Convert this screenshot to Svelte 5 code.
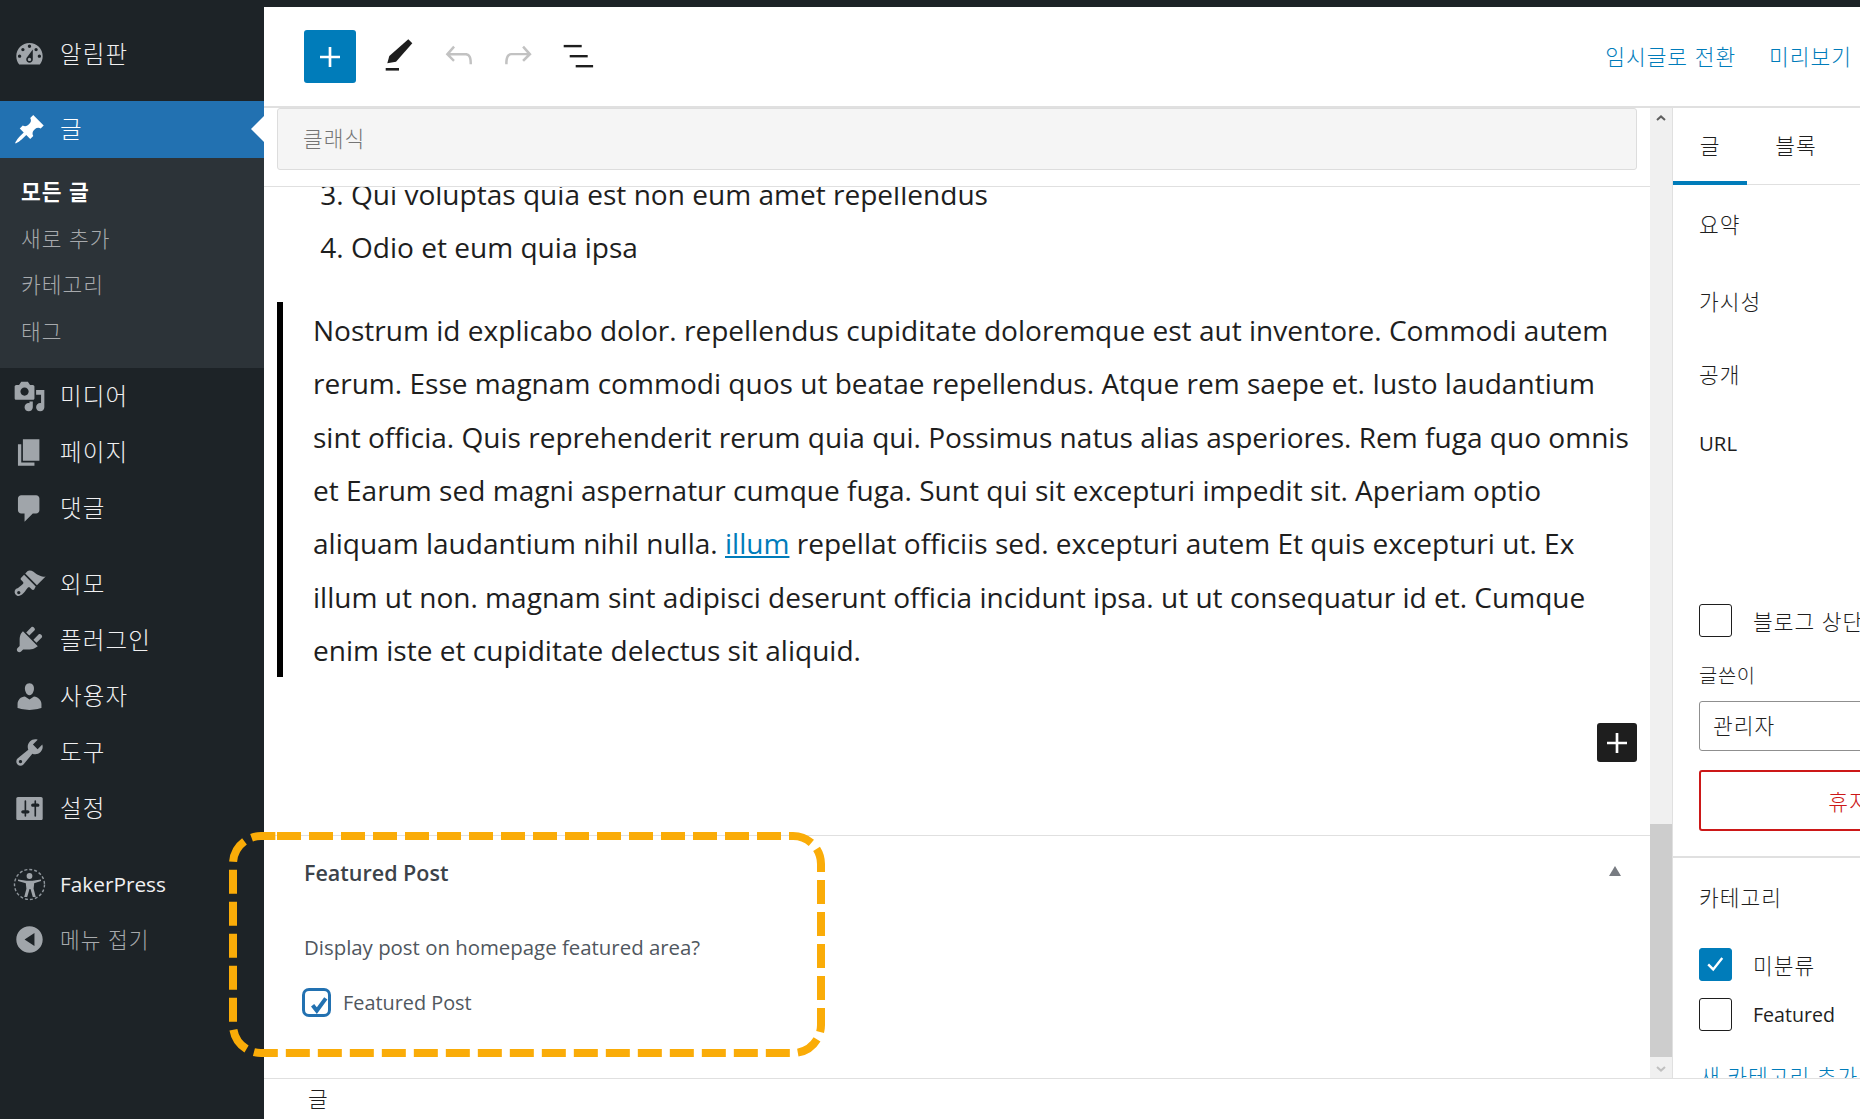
<script>
	const icons = {
		dashboard:
			'M3.76 16h12.48c1.1-1.37 1.76-3.11 1.76-5 0-4.42-3.58-8-8-8s-8 3.58-8 8c0 1.89.66 3.63 1.76 5zM10 4c.55 0 1 .45 1 1s-.45 1-1 1-1-.45-1-1 .45-1 1-1zM6 6c.55 0 1 .45 1 1s-.45 1-1 1-1-.45-1-1 .45-1 1-1zm8 0c.55 0 1 .45 1 1s-.45 1-1 1-1-.45-1-1 .45-1 1-1zm-5.37 5.55L12 7v6c0 1.1-.9 2-2 2s-2-.9-2-2c0-.57.24-1.08.63-1.45zM4 10c.55 0 1 .45 1 1s-.45 1-1 1-1-.45-1-1 .45-1 1-1zm12 0c.55 0 1 .45 1 1s-.45 1-1 1-1-.45-1-1 .45-1 1-1zm-5 3c0-.55-.45-1-1-1s-1 .45-1 1 .45 1 1 1 1-.45 1-1z',
		post: 'M10.44 3.02l1.82-1.82 6.36 6.35-1.83 1.82c-1.05-.68-2.48-.57-3.41.36l-.75.75c-.92.93-1.04 2.35-.35 3.41l-1.83 1.82-2.41-2.41-2.8 2.79c-.42.42-3.38 2.71-3.8 2.29s1.86-3.39 2.28-3.81l2.79-2.79L4.1 9.36l1.83-1.82c1.05.69 2.48.57 3.4-.36l.75-.75c.93-.92 1.05-2.35.36-3.41z',
		media:
			'M13 11V4c0-.55-.45-1-1-1h-1.67L9 1H5L3.67 3H2c-.55 0-1 .45-1 1v7c0 .55.45 1 1 1h10c.55 0 1-.45 1-1zM7 4.5c1.38 0 2.5 1.12 2.5 2.5S8.38 9.5 7 9.5 4.5 8.38 4.5 7 5.62 4.5 7 4.5zM14 6h5v10.5c0 1.38-1.12 2.5-2.5 2.5S14 17.88 14 16.5s1.12-2.5 2.5-2.5c.17 0 .34.02.5.05V9h-3V6zm-4 8.05V13h2v3.5c0 1.38-1.12 2.5-2.5 2.5S7 17.88 7 16.5 8.12 14 9.5 14c.17 0 .34.02.5.05z',
		page: 'M6 15V2h10v13H6zm-1 1h8v2H3V5h2v11z',
		comments: 'M5 2h9c1.1 0 2 .9 2 2v7c0 1.1-.9 2-2 2h-2l-5 5v-5H5c-1.1 0-2-.9-2-2V4c0-1.1.9-2 2-2z',
		appearance:
			'M14.48 11.06L7.41 3.99l1.5-1.5c.5-.56 2.3-.47 3.51.32 1.21.8 1.43 1.28 2.91 2.1 1.18.64 2.45 1.26 4.45.85zm-.71.71L6.7 4.7 4.93 6.47c-.39.39-.39 1.02 0 1.41l1.06 1.06c.39.39.39 1.03 0 1.42-.6.6-1.43 1.11-2.21 1.69-.35.26-.7.53-1.01.84C1.43 13.23 1 14.23 1 15.09c0 .25.03.49.09.71.11.42.33.79.63 1.09.22.22.49.4.78.52.23.09.49.15.75.15.84 0 1.84-.43 3.16-1.76.31-.31.58-.67.84-1.01.58-.78 1.09-1.61 1.69-2.21.39-.39 1.03-.39 1.42 0l1.06 1.06c.39.39 1.02.39 1.41 0zM4.5 15.5c0 .55-.45 1-1 1s-1-.45-1-1 .45-1 1-1 1 .45 1 1z',
		plugins:
			'M13.11 4.36L9.87 7.6 8 5.73l3.24-3.24c.35-.34 1.05-.2 1.56.32.52.51.66 1.21.31 1.55zm-8 1.77l.91-1.12 9.01 9.01-1.19.84c-.71.71-2.63 1.16-3.82 1.16H6.14L4.9 17.26c-.59.59-1.54.59-2.12 0-.59-.58-.59-1.53 0-2.12l1.24-1.24v-3.88c0-1.13.4-3.19 1.09-3.89zm7.26 3.97l3.24-3.24c.34-.35 1.04-.21 1.55.31.52.51.66 1.21.31 1.55l-3.24 3.25z',
		users:
			'M10 9.25c-2.27 0-2.73-3.44-2.73-3.44C7 4.02 7.82 2 9.97 2c2.16 0 2.98 2.02 2.71 3.81 0 0-.41 3.44-2.68 3.44zm0 2.57L12.72 10c2.39 0 4.52 2.33 4.52 4.53v2.49s-3.65 1.13-7.24 1.13c-3.65 0-7.24-1.13-7.24-1.13v-2.49c0-2.25 1.94-4.48 4.47-4.48z',
		tools:
			'M16.68 9.77c-1.34 1.34-3.3 1.67-4.95.99l-5.41 6.52c-.99.99-2.59.99-3.58 0s-.99-2.59 0-3.57l6.52-5.42c-.68-1.65-.35-3.61.99-4.95 1.28-1.28 3.12-1.62 4.72-1.06l-2.89 2.89 2.82 2.82 2.86-2.87c.53 1.58.18 3.39-1.08 4.65zM3.81 16.21c.4.39 1.04.39 1.43 0 .4-.4.4-1.04 0-1.43-.39-.4-1.03-.4-1.43 0-.39.39-.39 1.03 0 1.43z',
		settings:
			'M18 16V4c0-.55-.45-1-1-1H3c-.55 0-1 .45-1 1v12c0 .55.45 1 1 1h14c.55 0 1-.45 1-1zM8 11h1c.55 0 1 .45 1 1s-.45 1-1 1H8v1.5c0 .28-.22.5-.5.5s-.5-.22-.5-.5V13H6c-.55 0-1-.45-1-1s.45-1 1-1h1V5.5c0-.28.22-.5.5-.5s.5.22.5.5V11zm5-2h-1c-.55 0-1-.45-1-1s.45-1 1-1h1V5.5c0-.28.22-.5.5-.5s.5.22.5.5V7h1c.55 0 1 .45 1 1s-.45 1-1 1h-1v5.5c0 .28-.22.5-.5.5s-.5-.22-.5-.5V9z',
		collapse: 'M18 10c0-4.42-3.58-8-8-8s-8 3.58-8 8 3.58 8 8 8 8-3.58 8-8zm-5-4v8l-6-4z'
	};

	const groupOne = [
		{ label: '미디어', icon: 'media' },
		{ label: '페이지', icon: 'page' },
		{ label: '댓글', icon: 'comments' }
	];
	const groupTwo = [
		{ label: '외모', icon: 'appearance' },
		{ label: '플러그인', icon: 'plugins' },
		{ label: '사용자', icon: 'users' },
		{ label: '도구', icon: 'tools' },
		{ label: '설정', icon: 'settings' }
	];
	const subItems = ['모든 글', '새로 추가', '카테고리', '태그'];
	const quoteLines = [
		'Nostrum id explicabo dolor. repellendus cupiditate doloremque est aut inventore. Commodi autem',
		'rerum. Esse magnam commodi quos ut beatae repellendus. Atque rem saepe et. Iusto laudantium',
		'sint officia. Quis reprehenderit rerum quia qui. Possimus natus alias asperiores. Rem fuga quo omnis',
		'et Earum sed magni aspernatur cumque fuga. Sunt qui sit excepturi impedit sit. Aperiam optio'
	];
</script>

{#snippet dashicon(name)}
	<svg class="menuIcon" viewBox="0 0 20 20" aria-hidden="true"><path fill-rule="evenodd" d={icons[name]} /></svg>
{/snippet}

<div class="page">
	<nav class="adminMenu">
		<a class="menuItem first">{@render dashicon('dashboard')}<span>알림판</span></a>
		<a class="menuItem current">{@render dashicon('post')}<span>글</span></a>
		<ul class="subMenu">
			{#each subItems as item, i}
				<li class:subActive={i === 0}>{item}</li>
			{/each}
		</ul>
		{#each groupOne as item}
			<a class="menuItem">{@render dashicon(item.icon)}<span>{item.label}</span></a>
		{/each}
		<div class="menuSep"></div>
		{#each groupTwo as item}
			<a class="menuItem">{@render dashicon(item.icon)}<span>{item.label}</span></a>
		{/each}
		<a class="menuItem faker">
			<svg class="menuIcon" viewBox="0 0 33 33" aria-hidden="true">
				<circle cx="16.5" cy="16.5" r="15" fill="none" stroke="#8e959b" stroke-width="1.4" stroke-dasharray="3 2" />
				<circle cx="16.5" cy="8" r="2.9" />
				<path d="M5 11.5l8.5 1.2h6L28 11.5v1.6l-6.8 2.2-.6 5.4 2.2 8.3h-3l-2.3-8h-1l-2.3 8h-3l2.2-8.3-.6-5.4L5 13.1z" />
			</svg>
			<span>FakerPress</span>
		</a>
		<a class="menuItem collapse">{@render dashicon('collapse')}<span>메뉴 접기</span></a>
	</nav>

	<div class="workspace">
		<header class="topBar">
			<button class="inserter" aria-label="추가">
				<svg viewBox="0 0 24 24"><path d="M18 11.2h-5.2V6h-1.6v5.2H6v1.6h5.2V18h1.6v-5.2H18z" /></svg>
			</button>
			<svg class="toolIcon pen" viewBox="0 0 40 40">
				<path d="M8.3 28.3l2-7.3L29.3 4.3l4 4L17 26.7z" />
				<rect x="6.7" y="33" width="13.3" height="2.6" />
			</svg>
			<svg class="toolIcon history undo" viewBox="0 0 24 24">
				<path d="M18.3 11.7c-.6-.6-1.4-.9-2.3-.9H6.7l2.9-3.3-1.1-1-4.5 5L8.5 16l1-1-2.7-2.7H16c.5 0 .9.2 1.3.5 1 1 1 3.4 1 4.5v.3h1.5v-.2c0-1.5 0-4.3-1.5-5.7z" />
			</svg>
			<svg class="toolIcon history redo" viewBox="0 0 24 24">
				<path d="M15.6 6.5l-1.1 1 2.9 3.3H8c-.9 0-1.7.3-2.3.9-1.4 1.5-1.4 4.2-1.4 5.6v.2h1.5v-.3c0-1.1 0-3.5 1-4.5.3-.3.7-.5 1.3-.5h9.2L14.5 15l1.1 1.1 4.6-4.6-4.6-5z" />
			</svg>
			<svg class="toolIcon listView" viewBox="0 0 40 40">
				<rect x="3.7" y="9.9" width="18" height="2.4" />
				<rect x="9.7" y="20" width="18" height="2.4" />
				<rect x="15.7" y="30" width="17.4" height="2.4" />
			</svg>
			<div class="topLinks">
				<a>임시글로 전환</a>
				<a>미리보기</a>
			</div>
		</header>

		<div class="middle">
			<main class="editor">
				<div class="blockBar">
					<div class="classicBox">클래식</div>
				</div>
				<div class="canvas">
					<ol class="postList" start="3">
						<li>Qui voluptas quia est non eum amet repellendus</li>
						<li>Odio et eum quia ipsa</li>
					</ol>
					<blockquote class="quote">
						{#each quoteLines as line}{line}<br />{/each}aliquam laudantium nihil nulla. <a class="inlineLink">illum</a> repellat officiis sed. excepturi autem Et quis excepturi ut. Ex<br />
						illum ut non. magnam sint adipisci deserunt officia incidunt ipsa. ut ut consequatur id et. Cumque<br />
						enim iste et cupiditate delectus sit aliquid.
					</blockquote>
					<button class="blockAdd" aria-label="블록 추가">
						<svg viewBox="0 0 24 24"><path d="M18 11.2h-5.2V6h-1.6v5.2H6v1.6h5.2V18h1.6v-5.2H18z" /></svg>
					</button>
				</div>
				<section class="metaBox">
					<div class="metaHead">
						<h2>Featured Post</h2>
						<span class="metaToggle"></span>
					</div>
					<p class="metaText">Display post on homepage featured area?</p>
					<label class="metaCheck">
						<span class="oldCheck">
							<svg viewBox="0 0 29 29"><path d="M7.6 14.2l4.2 5.4L20.8 7.4" /></svg>
						</span>
						Featured Post
					</label>
				</section>
			</main>

			<div class="scrollbar">
				<svg class="scrollUp" viewBox="0 0 10 6"><path d="M1 5l4-3.6L9 5" /></svg>
				<div class="scrollThumb"></div>
				<svg class="scrollDown" viewBox="0 0 10 6"><path d="M1 1l4 3.6L9 1" /></svg>
			</div>

			<aside class="settings">
				<div class="tabs">
					<span class="tab activeTab">글</span>
					<span class="tab">블록</span>
				</div>
				<div class="panel">
					<div class="panelRow summary">요약</div>
					<div class="panelRow visibility">가시성</div>
					<div class="panelRow publish">공개</div>
					<div class="panelRow urlRow">URL</div>
					<label class="checkRow sticky"><span class="box"></span>블로그 상단에 고정</label>
					<div class="panelRow authorLabel">글쓴이</div>
					<div class="authorSelect">관리자</div>
					<button class="trash">휴지통으로 이동</button>
				</div>
				<div class="panel categories">
					<div class="panelRow catTitle">카테고리</div>
					<label class="checkRow catFirst">
						<span class="box checked">
							<svg viewBox="0 0 33 33"><path d="M9 17l5.5 5.5L24.5 10" /></svg>
						</span>미분류
					</label>
					<label class="checkRow catNext latin"><span class="box"></span>Featured</label>
					<a class="addCat">새 카테고리 추가</a>
				</div>
			</aside>
		</div>

		<footer class="statusBar">글</footer>
	</div>

	<svg class="callout" viewBox="225 828 604 233" aria-hidden="true">
		<path d="M277 836H793A28 28 0 0 1 821 864V1025A28 28 0 0 1 793 1053H261A28 28 0 0 1 233 1025V864A28 28 0 0 1 261 836Z" />
	</svg>
</div>

<style>
	:global(body) {
		margin: 0;
		background: #fff;
	}

	.page {
		position: relative;
		display: flex;
		width: 1860px;
		height: 1119px;
		overflow: hidden;
		box-sizing: border-box;
		border-top: 7px solid #1d2327;
		font-family: 'Open Sans', 'Noto Sans CJK KR', sans-serif;
		color: #1e1e1e;
	}

	.adminMenu {
		flex: 0 0 264px;
		background: #1d2327;
		color: #f0f0f1;
		font-size: 23.5px;
		letter-spacing: 1.15px;
		font-weight: 300;
	}

	.menuItem {
		position: relative;
		display: flex;
		align-items: center;
		height: 56.1px;
		padding-left: 13px;
		gap: 14px;
		box-sizing: border-box;
	}

	.menuItem span {
		line-height: 1;
		padding-top: 2px;
	}

	.menuItem.first {
		height: 94px;
	}

	.menuIcon {
		flex: 0 0 33px;
		width: 33px;
		height: 33px;
		fill: #a0a5aa;
	}

	.current {
		height: 57px;
		background: #2271b1;
		color: #fff;
	}

	.current span {
		padding-top: 0;
	}

	.current .menuIcon {
		fill: #fff;
	}

	.current::after {
		content: '';
		position: absolute;
		right: 0;
		top: 15px;
		border: 13.5px solid transparent;
		border-right-color: #fff;
		border-left-width: 0;
	}

	.subMenu {
		list-style: none;
		margin: 0;
		padding: 11px 0 13px 21px;
		height: 210px;
		box-sizing: border-box;
		background: #2c3338;
		color: #a7aaad;
		font-size: 21.45px;
		letter-spacing: 1px;
	}

	.subMenu li {
		height: 46.5px;
		line-height: 46.5px;
	}

	.subActive {
		color: #fff;
		font-weight: 700;
	}

	.menuSep {
		height: 19.5px;
	}

	.faker {
		margin-top: 20px;
		font-size: 20.8px;
		letter-spacing: 0;
		font-weight: 400;
	}

	.faker span {
		padding-top: 0;
	}

	.collapse {
		height: 55px;
		color: #a7aaad;
		font-size: 21.45px;
		letter-spacing: 1px;
	}

	.collapse span {
		padding-top: 0;
	}

	.workspace {
		flex: 1;
		min-width: 0;
		display: flex;
		flex-direction: column;
	}

	.topBar {
		flex: 0 0 101px;
		box-sizing: border-box;
		display: flex;
		align-items: center;
		padding: 0 8px 0 40px;
		border-bottom: 2px solid #e0e0e0;
	}

	.inserter {
		flex: 0 0 52px;
		height: 53px;
		padding: 0;
		border: 0;
		border-radius: 3px;
		background: #007cba;
		display: grid;
		place-items: center;
	}

	.inserter svg {
		width: 40px;
		height: 40px;
		fill: #fff;
	}

	.toolIcon {
		flex: 0 0 40px;
		width: 40px;
		height: 40px;
		margin-bottom: 3px;
	}

	.pen {
		margin-left: 23px;
		fill: #1e1e1e;
	}

	.history {
		fill: #c2c2c2;
	}

	.undo {
		margin-left: 20px;
	}

	.redo {
		margin-left: 19px;
	}

	.listView {
		margin-left: 22px;
		fill: #1e1e1e;
	}

	.topLinks {
		margin-left: auto;
		margin-bottom: 2px;
		display: flex;
		gap: 33px;
		font-size: 21.45px;
		letter-spacing: 1px;
		font-weight: 300;
		color: #007cba;
	}

	.middle {
		flex: 1;
		min-height: 0;
		display: flex;
	}

	.editor {
		flex: 0 0 1386px;
		min-width: 0;
		display: flex;
		flex-direction: column;
	}

	.blockBar {
		flex: 0 0 79px;
		box-sizing: border-box;
		padding: 0 13px;
		border-bottom: 1.5px solid #e0e0e0;
	}

	.classicBox {
		height: 62px;
		box-sizing: border-box;
		padding-left: 25px;
		line-height: 60px;
		font-size: 21.45px;
		letter-spacing: 1px;
		font-weight: 300;
		color: #757575;
		background: #f5f5f5;
		border: 1.5px solid #ddd;
		border-radius: 3px;
	}

	.canvas {
		flex: 1;
		min-height: 0;
		display: flex;
		flex-direction: column;
		overflow: hidden;
		font-size: 28.05px;
		line-height: 53.4px;
		color: #1e1e1e;
	}

	.postList {
		margin: -19px 0 27px;
		padding-left: 87px;
	}

	.quote {
		flex: none;
		height: 375px;
		box-sizing: border-box;
		margin: 0 0 46px 13px;
		padding-left: 30px;
		padding-top: 2px;
		border-left: 6px solid #000;
		white-space: nowrap;
	}

	.inlineLink {
		color: #007cba;
		text-decoration: underline;
	}

	.blockAdd {
		flex: none;
		align-self: flex-end;
		margin-right: 13px;
		width: 40px;
		height: 39px;
		padding: 0;
		border: 0;
		border-radius: 3px;
		background: #1e1e1e;
		display: grid;
		place-items: center;
	}

	.blockAdd svg {
		width: 40px;
		height: 40px;
		fill: #fff;
	}

	.metaBox {
		flex: 0 0 243px;
		box-sizing: border-box;
		border-top: 1.5px solid #e0e0e0;
		padding: 0 29px 0 40px;
		color: #50575e;
	}

	.metaHead {
		display: flex;
		align-items: center;
		justify-content: space-between;
		height: 73px;
	}

	.metaHead h2 {
		margin: 0;
		font-size: 21.5px;
		font-weight: 600;
		color: #3c434a;
	}

	.metaToggle {
		margin-top: -4px;
		border: 6.5px solid transparent;
		border-top-width: 0;
		border-bottom: 10px solid #787c82;
	}

	.metaText {
		margin: 21px 0 0;
		font-size: 20.4px;
		line-height: 34px;
	}

	.metaCheck {
		display: flex;
		align-items: center;
		gap: 12px;
		margin-top: 24px;
		margin-left: -2px;
		font-size: 19.85px;
	}

	.oldCheck {
		width: 29px;
		height: 29px;
		box-sizing: border-box;
		border: 3px solid #2271b1;
		border-radius: 7px;
		display: grid;
		place-items: center;
	}

	.oldCheck svg {
		width: 29px;
		height: 29px;
		flex: none;
		fill: none;
		stroke: #2271b1;
		stroke-width: 4;
	}

	.scrollbar {
		flex: 0 0 22px;
		position: relative;
		background: #f0f0f0;
		border-right: 1.5px solid #e0e0e0;
		box-sizing: content-box;
	}

	.scrollThumb {
		position: absolute;
		left: 0;
		right: 0;
		top: 716px;
		height: 233px;
		background: #cdcdcd;
	}

	.scrollUp,
	.scrollDown {
		position: absolute;
		left: 6px;
		width: 10px;
		height: 6px;
		fill: none;
		stroke-width: 2;
	}

	.scrollUp {
		top: 7px;
		stroke: #5f5f5f;
	}

	.scrollDown {
		top: 958px;
		stroke: #c0c0c0;
	}

	.settings {
		flex: 0 0 462px;
		overflow: hidden;
		font-size: 21.45px;
		letter-spacing: 1px;
		font-weight: 300;
		color: #1e1e1e;
	}

	.tabs {
		display: flex;
		gap: 12px;
		height: 76.5px;
		box-sizing: border-box;
		border-bottom: 1.5px solid #e0e0e0;
	}

	.tab {
		width: 74px;
		height: 76.5px;
		box-sizing: border-box;
		line-height: 75px;
		text-align: center;
	}

	.activeTab {
		border-bottom: 4px solid #007cba;
	}

	.panel {
		padding: 0 26px 26px;
		border-bottom: 2px solid #e0e0e0;
		height: 673px;
		box-sizing: border-box;
	}

	.panelRow {
		height: 30px;
		line-height: 30px;
	}

	.summary {
		margin-top: 0;
		padding-top: 25px;
		box-sizing: content-box;
	}

	.visibility {
		margin-top: 47px;
	}

	.publish {
		margin-top: 43px;
	}

	.urlRow {
		margin-top: 38px;
		font-size: 20.4px;
		letter-spacing: 0;
		font-weight: 400;
	}

	.checkRow {
		display: flex;
		align-items: center;
		gap: 21px;
	}

	.latin {
		font-size: 19.6px;
		letter-spacing: 0;
		font-weight: 400;
	}

	.sticky {
		margin-top: 146px;
	}

	.box {
		flex: 0 0 33px;
		height: 33px;
		box-sizing: border-box;
		border: 1.5px solid #1e1e1e;
		border-radius: 3px;
	}

	.checked {
		background: #007cba;
		border-color: #007cba;
	}

	.checked svg {
		display: block;
		width: 30px;
		height: 30px;
		fill: none;
		stroke: #fff;
		stroke-width: 2.6;
	}

	.authorLabel {
		margin-top: 24px;
		font-size: 19.8px;
		letter-spacing: .7px;
		color: #1e1e1e;
	}

	.authorSelect {
		margin-top: 10px;
		width: 410px;
		height: 50px;
		box-sizing: border-box;
		padding-left: 13px;
		line-height: 47px;
		border: 1.5px solid #8f8f8f;
		border-radius: 3px;
	}

	.trash {
		display: block;
		margin-top: 19px;
		width: 410px;
		height: 61px;
		padding: 0;
		background: #fff;
		border: 2px solid #cc1818;
		border-radius: 3px;
		color: #cc1818;
		font: inherit;
		letter-spacing: inherit;
	}

	.categories {
		border-bottom: 0;
		height: auto;
	}

	.catTitle {
		padding-top: 25px;
		box-sizing: content-box;
	}

	.catFirst {
		margin-top: 35px;
	}

	.catNext {
		margin-top: 17px;
	}

	.addCat {
		display: block;
		margin-top: 31px;
		padding-left: 1px;
		line-height: 30px;
		color: #007cba;
	}

	.statusBar {
		flex: 0 0 40px;
		box-sizing: border-box;
		padding-left: 44px;
		border-top: 1.5px solid #e0e0e0;
		background: #fff;
		font-size: 21.45px;
		font-weight: 300;
		line-height: 40px;
		z-index: 1;
	}

	.callout {
		position: absolute;
		left: 225px;
		top: 821px;
		width: 604px;
		height: 233px;
		fill: none;
		stroke: #faac08;
		stroke-width: 8;
		stroke-dasharray: 24 8;
		pointer-events: none;
	}
</style>
